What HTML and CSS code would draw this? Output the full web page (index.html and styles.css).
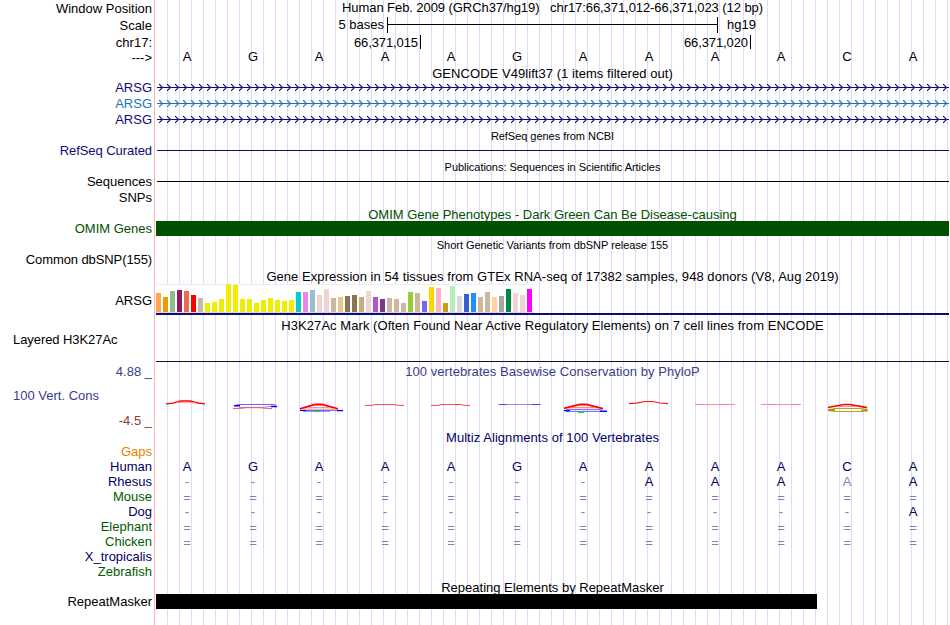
FILE: index.html
```html
<!DOCTYPE html>
<html lang="en">
<head>
    <meta charset="UTF-8">
    <meta name="viewport" content="width=device-width, initial-scale=1.0">
    <title>Genome Browser - chr17:66,371,012-66,371,023</title>
    <link rel="stylesheet" href="styles.css">
</head>
<body>
    <div class="browser">
        <div class="row header-row">
            <div class="label">Window Position</div>
            <div class="track title"><span class="tight">Human Feb. 2009 (GRCh37/hg19) &nbsp; chr17:66,371,012-66,371,023 (12 bp)</span></div>
        </div>
        <div class="row scale-row">
            <div class="label">Scale</div>
            <div class="track scale">
                <span class="scale-size">5 bases</span>
                <span class="scale-bar"><span class="scale-line"></span></span>
                <span class="scale-db">hg19</span>
            </div>
        </div>
        <div class="row chrom-row">
            <div class="label">chr17:</div>
            <div class="track ruler">
                <span class="tick first">66,371,015</span>
                <span class="tick">66,371,020</span>
            </div>
        </div>
        <div class="row base-row">
            <div class="label">---&gt;</div>
            <div class="track bases" data-seq="AGAAAGAAAACA"></div>
        </div>

        <div class="row title-row">
            <div class="label"></div>
            <div class="track title"><span class="wide">GENCODE V49lift37 (1 items filtered out)</span></div>
        </div>
        <div class="row gene navy">
            <div class="label">ARSG</div>
            <div class="track"><svg class="intron" width="793" height="16">
                <defs>
                    <pattern id="arrow-navy" width="8" height="16" patternUnits="userSpaceOnUse">
                        <path d="M3.5 4.5L6.5 7.5L3.5 10.5" fill="none" stroke="#0c0c78" stroke-width="1.1" stroke-linecap="square"/>
                    </pattern>
                    <pattern id="arrow-blue" width="8" height="16" patternUnits="userSpaceOnUse">
                        <path d="M3.5 4.5L6.5 7.5L3.5 10.5" fill="none" stroke="#1a75bb" stroke-width="1.1" stroke-linecap="square"/>
                    </pattern>
                </defs>
                <rect width="793" height="16" fill="url(#arrow-navy)"/>
                <rect x="1" y="7" width="792" height="1" fill="#0c0c78"/>
            </svg></div>
        </div>
        <div class="row gene blue">
            <div class="label">ARSG</div>
            <div class="track"><svg class="intron" width="793" height="16">
                <rect width="793" height="16" fill="url(#arrow-blue)"/>
                <rect x="1" y="7" width="792" height="1" fill="#1a6fb5"/>
            </svg></div>
        </div>
        <div class="row gene navy">
            <div class="label">ARSG</div>
            <div class="track"><svg class="intron" width="793" height="16">
                <rect width="793" height="16" fill="url(#arrow-navy)"/>
                <rect x="1" y="7" width="792" height="1" fill="#0c0c78"/>
            </svg></div>
        </div>

        <div class="row small-title-row">
            <div class="label"></div>
            <div class="track title small"><span>RefSeq genes from NCBI</span></div>
        </div>
        <div class="row gene navy">
            <div class="label tight">RefSeq Curated</div>
            <div class="track"><div class="line"></div></div>
        </div>

        <div class="row small-title-row">
            <div class="label"></div>
            <div class="track title small"><span>Publications: Sequences in Scientific Articles</span></div>
        </div>
        <div class="row gene">
            <div class="label">Sequences</div>
            <div class="track"><div class="line"></div></div>
        </div>
        <div class="row gene">
            <div class="label">SNPs</div>
            <div class="track"></div>
        </div>

        <div class="row title-row green">
            <div class="label"></div>
            <div class="track title"><span>OMIM Gene Phenotypes - Dark Green Can Be Disease-causing</span></div>
        </div>
        <div class="row gene green">
            <div class="label">OMIM Genes</div>
            <div class="track"><div class="block omim"></div></div>
        </div>

        <div class="row small-title-row">
            <div class="label"></div>
            <div class="track title small"><span>Short Genetic Variants from dbSNP release 155</span></div>
        </div>
        <div class="row gene">
            <div class="label tighter">Common dbSNP(155)</div>
            <div class="track"></div>
        </div>

        <div class="row title-row tall">
            <div class="label"></div>
            <div class="track title"><span class="wide">Gene Expression in 54 tissues from GTEx RNA-seq of 17382 samples, 948 donors (V8, Aug 2019)</span></div>
        </div>
        <div class="row gtex-row">
            <div class="label">ARSG</div>
            <div class="track">
                <div class="gtex" id="gtex"></div>
                <div class="gtex-gene"></div>
            </div>
        </div>

        <div class="row title-row">
            <div class="label"></div>
            <div class="track title"><span class="wide">H3K27Ac Mark (Often Found Near Active Regulatory Elements) on 7 cell lines from ENCODE</span></div>
        </div>
        <div class="row h3k-row">
            <div class="label left tight">Layered H3K27Ac</div>
            <div class="track"><div class="baseline"></div></div>
        </div>

        <div class="row cons-row">
            <div class="label cons-label">
                <span class="cons-max">4.88 _</span>
                <span class="cons-name">100 Vert. Cons</span>
                <span class="cons-min">-4.5 _</span>
            </div>
            <div class="track">
                <div class="title"><span class="wide">100 vertebrates Basewise Conservation by PhyloP</span></div>
                <svg class="phylop" width="793" height="50" viewBox="156 379 793 50" fill="none">
                    <!-- A -->
                    <path d="M166 403.8L173 403.2L181 401H190L198 403L205 403.8" stroke="#f00" stroke-width="1.3"/>
                    <path d="M176 402.7H196" stroke="#f88" stroke-width=".8"/>
                    <!-- G -->
                    <path d="M236 405L240 404.5H272L276 405" stroke="#66f"/>
                    <path d="M239 407.4H262L272 406.2" stroke="#88f"/>
                    <path d="M234 405.7H240M271 406.5H277" stroke="#00f" stroke-width="1.5"/>
                    <path d="M233 408.6L241 408.3L246 407.7H260L266 408.3L272 408.6" stroke="#f55"/>
                    <!-- A -->
                    <path d="M300 408.8L315 404.5H322L338 408.8" stroke="#f00" stroke-width="1.8"/>
                    <path d="M308 407.5H330M303 409.2H336" stroke="#f88" stroke-width=".9"/>
                    <path d="M301 410.4H343M303 411.2H330" stroke="#55f" stroke-width=".9"/>
                    <path d="M300 410.5H306M337 410.6H343" stroke="#00f" stroke-width="1.2"/>
                    <path d="M314 411.5H320" stroke="#0e2" stroke-width="1.1"/>
                    <!-- A, A -->
                    <path d="M365 405.4H372L375 404.5H395L398 405.4H404" stroke="#f44"/>
                    <path d="M431 405.4H438L441 404.5H461L464 405.4H470" stroke="#f44"/>
                    <!-- G -->
                    <path d="M498 404.5H541" stroke="#88f"/>
                    <path d="M500 404.5H506M532 404.5H540" stroke="#44f"/>
                    <!-- A -->
                    <path d="M564 408.4L580 404.5H586L603 408.6" stroke="#f00" stroke-width="1.8"/>
                    <path d="M572 407.5H594M567 409.2H600" stroke="#f77" stroke-width=".9"/>
                    <path d="M566 409.7H602M566 411.5H606" stroke="#66f" stroke-width=".9"/>
                    <path d="M564 410.6H570M600 411.2H607" stroke="#00f" stroke-width="1.4"/>
                    <path d="M578 412.5H584" stroke="#0e2" stroke-width="1.1"/>
                    <!-- A -->
                    <path d="M629 403.6L636 403.2L645 401.5H653L660 403L668 403.6" stroke="#f11" stroke-width="1.2"/>
                    <!-- A, A -->
                    <path d="M695 404.5H735M761 404.5H801" stroke="#f88"/>
                    <!-- C -->
                    <path d="M828 407.5L844 404.5H850L867 407.6" stroke="#f00" stroke-width="1.7"/>
                    <path d="M837 406.6H857" stroke="#f77" stroke-width=".9"/>
                    <path d="M829 409.5L835 408.5H861L867 409.5M829 410.8L835 411.5H861L867 410.8" stroke="#aa2"/>
                    <path d="M828 410H835M861 410.3H868" stroke="#a0a000" stroke-width="1.8"/>
                </svg>
            </div>
        </div>

        <div class="row title-row navy-dark">
            <div class="label"></div>
            <div class="track title"><span class="wide">Multiz Alignments of 100 Vertebrates</span></div>
        </div>
        <div class="row species orange">
            <div class="label">Gaps</div>
            <div class="track"></div>
        </div>
        <div class="row species navy-dark">
            <div class="label">Human</div>
            <div class="track bases" data-seq="AGAAAGAAAACA"></div>
        </div>
        <div class="row species navy-dark">
            <div class="label">Rhesus</div>
            <div class="track bases" data-seq="-------AAAaA"></div>
        </div>
        <div class="row species forest">
            <div class="label">Mouse</div>
            <div class="track bases unaligned" data-seq="============"></div>
        </div>
        <div class="row species navy-dark">
            <div class="label">Dog</div>
            <div class="track bases" data-seq="-----------A"></div>
        </div>
        <div class="row species forest">
            <div class="label">Elephant</div>
            <div class="track bases unaligned" data-seq="============"></div>
        </div>
        <div class="row species forest">
            <div class="label">Chicken</div>
            <div class="track bases unaligned" data-seq="============"></div>
        </div>
        <div class="row species navy-dark">
            <div class="label">X_tropicalis</div>
            <div class="track"></div>
        </div>
        <div class="row species forest">
            <div class="label">Zebrafish</div>
            <div class="track"></div>
        </div>

        <div class="row title-row">
            <div class="label"></div>
            <div class="track title"><span>Repeating Elements by RepeatMasker</span></div>
        </div>
        <div class="row gene">
            <div class="label">RepeatMasker</div>
            <div class="track"><div class="block rmsk"></div></div>
        </div>
    </div>

    <script src="tracks.js"></script>
</body>
</html>
```
FILE: styles.css
```css
:root {
    --navy: #0c0c78;
    --navy-dark: #000064;
    --grid-line: #dcdcfa;
    --window-edge: #ffb4b4;
}

* {
    box-sizing: border-box;
    margin: 0;
    padding: 0;
}

body {
    font-family: "Liberation Sans", Arial, Helvetica, sans-serif;
    font-size: 13px;
    line-height: 15px;
    color: #000;
    background-color: #fff;
    overflow: hidden;
}

/* vertical guide lines run behind every track */
.browser {
    width: 949px;
    height: 625px;
    background-image:
        linear-gradient(to right, transparent 154px, var(--window-edge) 154px, var(--window-edge) 155px, #fff 155px, #fff 156px, transparent 156px),
        repeating-linear-gradient(to right, transparent 0, transparent 11px, var(--grid-line) 11px, var(--grid-line) 12px);
    background-position: 0 0, 156px 0;
    background-repeat: no-repeat;
}

.row {
    display: grid;
    grid-template-columns: 156px 793px;
    height: 16px;
}

.label {
    padding-right: 4px;
    text-align: right;
    white-space: nowrap;
}

.label.left {
    padding-left: 13px;
    text-align: left;
}

.track {
    min-width: 0;
}

.title {
    text-align: center;
    white-space: nowrap;
}

.small {
    font-size: 11px;
    letter-spacing: -0.04px;
}

.wide {
    letter-spacing: 0.055px;
}

.tight {
    letter-spacing: -0.07px;
}

.tighter {
    letter-spacing: -0.1px;
}

svg {
    display: block;
}

/* colors */
.navy {
    color: var(--navy);
}

.blue {
    color: #1a75bb;
}

.green {
    color: #005000;
}

.navy-dark {
    color: var(--navy-dark);
}

.forest {
    color: #005a00;
}

.orange {
    color: #e68200;
}

/* position header */
.header-row {
    height: 17px;
}

.header-row .label,
.scale-row .label,
.chrom-row .label,
.base-row .label {
    padding-top: 1px;
}

.scale-row {
    height: 17px;
}

.scale {
    display: flex;
}

.scale-size {
    width: 228px;
    margin-right: 3px;
    text-align: right;
}

.scale-bar {
    display: flex;
    align-items: center;
    width: 331px;
    height: 16px;
    border-left: 1px solid #000;
    border-right: 1px solid #000;
}

.scale-line {
    flex: 1;
    height: 1px;
    margin-bottom: 1px;
    background-color: #000;
}

.scale-db {
    padding-left: 9px;
}

.chrom-row {
    height: 15px;
}

.ruler {
    display: flex;
    padding-top: 1px;
}

.tick {
    width: 330px;
    height: 14px;
    padding-right: 2px;
    border-right: 1px solid #000;
    text-align: right;
    letter-spacing: -0.1px;
}

.tick.first {
    width: 265px;
}

.bases {
    display: grid;
    grid-template-columns: repeat(12, 66px);
}

.bases.unaligned {
    padding-top: 1px;
}

.base {
    padding-right: 4px;
    text-align: center;
}

.base.faint {
    color: #8080b8;
}

/* track rows */
.title-row {
    height: 15px;
    padding-top: 1px;
}

.title-row.tall {
    height: 16px;
}

.small-title-row,
.species {
    height: 15px;
}

.small-title-row {
    padding-top: 1px;
}

.line {
    height: 1px;
    margin: 7px 0 0 1px;
    background-color: currentColor;
}

.block {
    height: 15px;
}

.omim {
    background-color: #005000;
}

.rmsk {
    width: 661px;
    background-color: #000;
}

/* GTEx bar graph */
.gtex-row {
    height: 33px;
}

.gtex-row .label {
    padding-top: 9px;
}

.gtex {
    display: flex;
    align-items: flex-end;
    gap: 2px;
    width: 378px;
    height: 29px;
    border-bottom: 1px solid #d8d8d8;
    background: linear-gradient(#eee, #eee) top / 100% 1px no-repeat #fff;
}

.bar {
    width: 5px;
}

.gtex-gene {
    height: 2px;
    background-color: var(--navy);
}

.h3k-row {
    height: 31px;
}

.baseline {
    height: 1px;
    margin-top: 29px;
    background-color: #200a30;
}

/* conservation */
.cons-row {
    height: 66px;
    padding-top: 1px;
    color: #3c3c8c;
}

.cons-label {
    display: flex;
    flex-direction: column;
}

.cons-name {
    padding: 9px 0 10px 13px;
    text-align: left;
}

.cons-min {
    color: #8c3c3c;
}
```
FILE: tracks.js
```javascript
// median expression per tissue: [height in px, tissue color]
const tissues = [
    [19, '#ffa54f'], [15, '#ee9a00'], [21, '#8fbc8f'], [22, '#8b1c62'], [21, '#ee6a50'], [17, '#ff0000'],
    [14, '#cdb79e'], [9, '#eeee00'], [10, '#eeee00'], [13, '#eeee00'], [28, '#eeee00'], [27, '#eeee00'],
    [13, '#eeee00'], [13, '#eeee00'], [9, '#eeee00'], [12, '#eeee00'], [14, '#eeee00'], [12, '#eeee00'],
    [11, '#eeee00'], [12, '#eeee00'], [20, '#00cdcd'], [20, '#ee82ee'], [22, '#9ac0cd'], [17, '#eed5d2'],
    [23, '#eed5d2'], [14, '#cdb79e'], [15, '#eec591'], [16, '#8b7355'], [17, '#8b7355'], [15, '#cdaa7d'],
    [21, '#eed5d2'], [15, '#b452cd'], [13, '#7a378b'], [14, '#cdb79e'], [13, '#cdb79e'], [9, '#cdb79e'],
    [20, '#9acd32'], [19, '#cdb79e'], [11, '#7a67ee'], [25, '#ffd700'], [24, '#ffb6c1'], [9, '#cd9b1d'],
    [26, '#b4eeb4'], [16, '#d9d9d9'], [18, '#3a5fcd'], [19, '#1e90ff'], [15, '#cdb79e'], [20, '#cdb79e'],
    [15, '#ffd39b'], [16, '#a6a6a6'], [23, '#008b45'], [19, '#eed5d2'], [17, '#eed5d2'], [23, '#ff00ff']
];

const gtex = document.getElementById('gtex');
tissues.forEach(([height, color]) => {
    const bar = document.createElement('div');
    bar.className = 'bar';
    bar.style.height = height + 'px';
    bar.style.backgroundColor = color;
    gtex.appendChild(bar);
});

// one cell per base, lower case means a mismatch
document.querySelectorAll('.bases').forEach(track => {
    for (const ch of track.dataset.seq) {
        const base = document.createElement('span');
        base.className = /[A-Z]/.test(ch) ? 'base' : 'base faint';
        base.textContent = ch.toUpperCase();
        track.appendChild(base);
    }
});
```
